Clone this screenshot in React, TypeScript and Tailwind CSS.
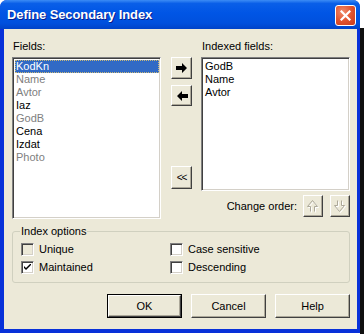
import React from "react";

const font = { fontFamily: '"Liberation Sans", Arial, sans-serif' };

function Btn({ className = "", children, def = false }: { className?: string; children?: React.ReactNode; def?: boolean }) {
  if (def) {
    return (
      <div className={`border border-black ${className}`}>
        <div className="w-full h-full bg-[#ECE9D8] border border-t-white border-l-white border-b-[#404040] border-r-[#404040] shadow-[inset_-1px_-1px_0_#ACA899] flex items-center justify-center">
          {children}
        </div>
      </div>
    );
  }
  return (
    <div className={`bg-[#ECE9D8] border border-t-white border-l-white border-b-[#404040] border-r-[#404040] shadow-[inset_-1px_-1px_0_#ACA899] flex items-center justify-center ${className}`}>
      {children}
    </div>
  );
}

function Check({ checked = false, disabled = false }: { checked?: boolean; disabled?: boolean }) {
  return (
    <div
      className={`w-[13px] h-[13px] border border-t-[#808080] border-l-[#808080] border-b-white border-r-white shadow-[inset_1px_1px_0_#404040,inset_-1px_-1px_0_#D4D0C8] flex items-center justify-center ${disabled ? "bg-[#ECE9D8]" : "bg-white"}`}
    >
      {checked && (
        <svg width="7" height="7" viewBox="0 0 7 7">
          <path d="M0 2 L0 4 L2 6 L7 1 L7 -1 L2 4 Z" fill="black" />
        </svg>
      )}
    </div>
  );
}

function ArrowRight() {
  return (
    <svg width="12" height="10" viewBox="0 0 12 10">
      <polygon points="0,3 6,3 6,0 11,5 6,10 6,7 0,7" fill="black" />
    </svg>
  );
}
function ArrowLeft() {
  return (
    <svg width="12" height="10" viewBox="0 0 12 10">
      <polygon points="12,3 6,3 6,0 1,5 6,10 6,7 12,7" fill="black" />
    </svg>
  );
}

function UpOutline() {
  return (
    <svg width="12" height="13" viewBox="0 0 12 13">
      <polyline points="4.5,12.5 4.5,7.5 1.5,7.5 6.5,1.5 11.5,7.5 8.5,7.5 8.5,12.5" fill="none" stroke="white" />
      <polyline points="3.5,11.5 3.5,6.5 0.5,6.5 5.5,0.5 10.5,6.5 7.5,6.5 7.5,11.5" fill="none" stroke="#ACA899" />
    </svg>
  );
}
function DownOutline() {
  return (
    <svg width="12" height="13" viewBox="0 0 12 13">
      <polyline points="4.5,1.5 4.5,6.5 1.5,6.5 6.5,12.5 11.5,6.5 8.5,6.5 8.5,1.5" fill="none" stroke="white" />
      <polyline points="3.5,0.5 3.5,5.5 0.5,5.5 5.5,11.5 10.5,5.5 7.5,5.5 7.5,0.5" fill="none" stroke="#ACA899" />
    </svg>
  );
}

const leftItems: { t: string; gray?: boolean }[] = [
  { t: "KodKn" },
  { t: "Name", gray: true },
  { t: "Avtor", gray: true },
  { t: "Iaz" },
  { t: "GodB", gray: true },
  { t: "Cena" },
  { t: "Izdat" },
  { t: "Photo", gray: true },
];

export default function App() {
  return (
    <div className="w-[364px] h-[334px] bg-white relative overflow-hidden text-[11px] text-black" style={font}>
      <div className="absolute right-0 top-[28px] w-[4px] h-[306px] bg-[#101010]" />
      <div className="w-[360px] h-[333px] rounded-t-[7px] bg-[#0831D9] flex flex-col px-[4px] pr-[3px] pb-[4px]">
        {/* Title bar */}
        <div className="h-[29px] -mx-[4px] -mr-[3px] rounded-t-[7px] bg-[linear-gradient(180deg,#3C8CF5_0%,#0A5FE8_12%,#0055E5_45%,#0050DD_80%,#0043C8_100%)] flex items-center pl-[7px] pr-[4px]">
          <span className="text-white font-bold text-[13px] tracking-[-0.1px] [text-shadow:1px_1px_0_#0A1E8C] flex-1" style={font}>
            Define Secondary Index
          </span>
          <div className="w-[21px] h-[21px] rounded-[3px] border border-white bg-[radial-gradient(circle_at_35%_30%,#F08C6C_0%,#E2542F_50%,#C83A1A_100%)] flex items-center justify-center mt-[1px]">
            <svg width="11" height="11" viewBox="0 0 11 11">
              <path d="M1.5 1.5 L9.5 9.5 M9.5 1.5 L1.5 9.5" stroke="white" strokeWidth="2.2" strokeLinecap="square" />
            </svg>
          </div>
        </div>
        {/* Content */}
        <div className="flex-1 bg-[#ECE9D8] flex flex-col pl-[8px]">
          <div className="flex mt-[10px]">
            {/* Left column */}
            <div className="w-[149px] flex flex-col">
              <div className="h-[14px] leading-[14px] pl-[1px]">Fields:</div>
              <div className="mt-[4px] h-[162px] bg-white border border-t-[#808080] border-l-[#808080] border-b-white border-r-white shadow-[inset_1px_1px_0_#404040,inset_-1px_-1px_0_#D4D0C8] p-[2px] pt-[2px] pr-[1px]">
                {leftItems.map((it, i) => (
                  <div
                    key={it.t}
                    className={`h-[13px] leading-[13px] pl-[1px] ${i === 0 ? "bg-[#316AC5] text-white outline outline-1 outline-dotted outline-[#C8B878] -outline-offset-1" : it.gray ? "text-[#808080]" : "text-black"}`}
                  >
                    {it.t}
                  </div>
                ))}
              </div>
            </div>
            {/* Middle buttons */}
            <div className="w-[21px] ml-[10px] flex flex-col pt-[18px]">
              <Btn className="h-[22px]"><ArrowRight /></Btn>
              <Btn className="h-[21px] mt-[6px]"><ArrowLeft /></Btn>
              <Btn className="h-[23px] mt-[60px]"><span className="text-[10px] leading-none tracking-[-1px]">&lt;&lt;</span></Btn>
            </div>
            {/* Right column */}
            <div className="w-[149px] ml-[9px] flex flex-col">
              <div className="h-[14px] leading-[14px] pl-[1px]">Indexed fields:</div>
              <div className="mt-[4px] h-[134px] bg-white border border-t-[#808080] border-l-[#808080] border-b-white border-r-white shadow-[inset_1px_1px_0_#404040,inset_-1px_-1px_0_#D4D0C8] p-[2px]">
                {["GodB", "Name", "Avtor"].map((t) => (
                  <div key={t} className="h-[13px] leading-[13px] pl-[1px]">{t}</div>
                ))}
              </div>
              <div className="mt-[4px] h-[22px] flex items-center justify-end">
                <span className="mr-[6px]">Change order:</span>
                <Btn className="w-[20px] h-[22px]"><UpOutline /></Btn>
                <Btn className="w-[20px] h-[22px] ml-[7px]"><DownOutline /></Btn>
              </div>
            </div>
          </div>
          {/* Group box */}
          <div className="mt-[12px] w-[338px] h-[52px] relative border border-[#D0D0BF] rounded-[3px]">
            <span className="absolute left-[7px] -top-[8px] px-[1px] bg-[#ECE9D8] leading-[14px]">Index options</span>
            <div className="grid grid-cols-[149px_1fr] pl-[8px] pt-[11px] gap-y-[5px]">
              <div className="flex items-center h-[13px]"><Check disabled /><span className="ml-[5px]">Unique</span></div>
              <div className="flex items-center h-[13px]"><Check /><span className="ml-[5px]">Case sensitive</span></div>
              <div className="flex items-center h-[13px]"><Check checked /><span className="ml-[5px]">Maintained</span></div>
              <div className="flex items-center h-[13px]"><Check /><span className="ml-[5px]">Descending</span></div>
            </div>
          </div>
          {/* Buttons */}
          <div className="mt-[11px] w-[338px] flex justify-end gap-[9px]">
            <Btn def className="w-[75px] h-[24px]"><span>OK</span></Btn>
            <Btn className="w-[75px] h-[24px]"><span>Cancel</span></Btn>
            <Btn className="w-[75px] h-[24px]"><span>Help</span></Btn>
          </div>
        </div>
      </div>
    </div>
  );
}
